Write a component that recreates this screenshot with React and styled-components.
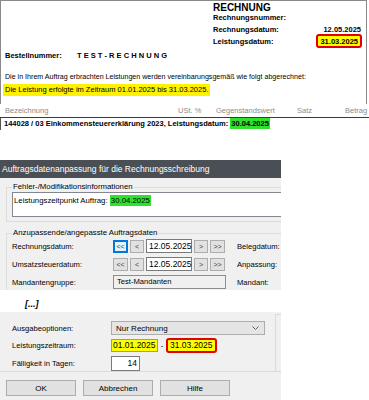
import React from 'react'
import styled, { createGlobalStyle } from 'styled-components'

const GlobalStyle = createGlobalStyle`
  * { box-sizing: border-box; }
  html, body { margin: 0; padding: 0; background: #ffffff; }
  body {
    width: 369px;
    height: 400px;
    overflow: hidden;
    font-family: "Liberation Sans", Arial, sans-serif;
    color: #000;
  }
`

function DatePicker({ value, focused }) {
  return (
    <Picker>
      <StepButton $focused={focused} $wide>{'<<'}</StepButton>
      <StepButton>{'<'}</StepButton>
      <DateInput>{value}</DateInput>
      <StepButton>{'>'}</StepButton>
      <StepButton $wide>{'>>'}</StepButton>
    </Picker>
  )
}

function App() {
  return (
    <>
      <GlobalStyle />
      <Page>
        <Invoice>
          <Frame>
            <HeadBlock>
              <DocTitle>RECHNUNG</DocTitle>
              <InfoRow><span>Rechnungsnummer:</span><span></span></InfoRow>
              <InfoRow><span>Rechnungsdatum:</span><InfoValue>12.05.2025</InfoValue></InfoRow>
              <InfoRow><span>Leistungsdatum:</span><MarkedValue>31.03.2025</MarkedValue></InfoRow>
            </HeadBlock>
            <OrderRow>
              <OrderLabel>Bestellnummer:</OrderLabel>
              <span>T E S T - R E C H N U N G</span>
            </OrderRow>
            <Para $gap={10} $size={7.1}>Die in Ihrem Auftrag erbrachten Leistungen werden vereinbarungsgemäß wie folgt abgerechnet:</Para>
            <Para $gap={1} $tight><Yellow>Die Leistung erfolgte im Zeitraum 01.01.2025 bis 31.03.2025.</Yellow></Para>
          </Frame>
          <TableHead>
            <span>Bezeichnung</span>
            <span>USt. %</span>
            <span>Gegenstandswert</span>
            <span>Satz</span>
            <span>Betrag</span>
          </TableHead>
          <TableRow>
            144028 / 03 Einkommensteuererklärung 2023, Leistungsdatum: <Green>30.04.2025</Green>
          </TableRow>
        </Invoice>

        <Dialog>
          <TitleBar>Auftragsdatenanpassung für die Rechnungsschreibung</TitleBar>
          <DialogBody>
            <Group>
              <Legend>Fehler-/Modifikationsinformationen</Legend>
              <Memo>Leistungszeitpunkt Auftrag: <Green>30.04.2025</Green></Memo>
            </Group>
            <Group $open>
              <Legend>Anzupassende/angepasste Auftragsdaten</Legend>
              <Rows>
                <FieldRow>
                  <FieldLabel>Rechnungsdatum:</FieldLabel>
                  <DatePicker value="12.05.2025" focused />
                  <SideLabel>Belegdatum:</SideLabel>
                </FieldRow>
                <FieldRow>
                  <FieldLabel>Umsatzsteuerdatum:</FieldLabel>
                  <DatePicker value="12.05.2025" />
                  <SideLabel>Anpassung:</SideLabel>
                </FieldRow>
                <FieldRow>
                  <FieldLabel>Mandantengruppe:</FieldLabel>
                  <ReadOnlyBox>Test-Mandanten</ReadOnlyBox>
                  <SideLabel $shift={11}>Mandant:</SideLabel>
                </FieldRow>
              </Rows>
            </Group>
          </DialogBody>

          <Ellipsis>[...]</Ellipsis>

          <LowerPanel>
            <OptionsArea>
              <LeftOptions>
                <OptionRow>
                  <OptionLabel>Ausgabeoptionen:</OptionLabel>
                  <Select>
                    <span>Nur Rechnung</span>
                    <svg width="7" height="4" viewBox="0 0 7 4">
                      <path d="M0.5 0.5 L3.5 3.5 L6.5 0.5" fill="none" stroke="#606060" strokeWidth="1" />
                    </svg>
                  </Select>
                </OptionRow>
                <OptionRow>
                  <OptionLabel>Leistungszeitraum:</OptionLabel>
                  <PeriodInput>01.01.2025</PeriodInput>
                  <Dash>-</Dash>
                  <PeriodInput $marked>31.03.2025</PeriodInput>
                </OptionRow>
                <OptionRow $gap={4}>
                  <OptionLabel>Fälligkeit in Tagen:</OptionLabel>
                  <NumberInput>14</NumberInput>
                </OptionRow>
              </LeftOptions>
              <SidePanel />
            </OptionsArea>
            <ButtonRow>
              <DialogButton>OK</DialogButton>
              <DialogButton>Abbrechen</DialogButton>
              <DialogButton>Hilfe</DialogButton>
            </ButtonRow>
          </LowerPanel>
        </Dialog>
      </Page>
    </>
  )
}

const Page = styled.div`
  width: 369px;
  height: 400px;
  display: flex;
  flex-direction: column;
`

/* ---------- invoice ---------- */

const Invoice = styled.div`
  font-size: 7.5px;
  white-space: nowrap;
`

const Frame = styled.div`
  width: 367px;
  height: 104px;
  border: 1px solid #8a8a8a;
  border-bottom: none;
  display: flex;
  flex-direction: column;
`

const HeadBlock = styled.div`
  align-self: flex-end;
  width: 149px;
  margin-right: 4px;
  font-weight: bold;
`

const DocTitle = styled.div`
  font-size: 10px;
  line-height: 11px;
  padding-top: 1px;
  margin-bottom: -2px;
`

const InfoRow = styled.div`
  height: 12px;
  display: flex;
  align-items: center;
  justify-content: space-between;
`

const InfoValue = styled.span`
  padding-right: 1px;
`

const MarkedValue = styled.span`
  display: inline-flex;
  align-items: center;
  height: 14px;
  padding: 0 2px;
  background: #ffff00;
  border: 2px solid #e00000;
  border-radius: 3px;
`

const OrderRow = styled.div`
  display: flex;
  align-items: center;
  height: 12px;
  margin-top: 2px;
  padding-left: 4px;
  font-weight: bold;
`

const OrderLabel = styled.span`
  width: 72px;
`

const Para = styled.div`
  line-height: 12px;
  margin-top: ${p => p.$gap}px;
  padding-left: ${p => (p.$tight ? 2 : 4)}px;
  font-size: ${p => p.$size || 7.5}px;
`

const Yellow = styled.span`
  display: inline-block;
  padding: 0 2px;
  background: #fff200;
`

const Green = styled.span`
  background: #2ee22e;
  padding: 1px 1px;
`

const TableHead = styled.div`
  width: 369px;
  margin-top: 1px;
  display: grid;
  grid-template-columns: 173px 38px 81px 48px auto;
  line-height: 12px;
  padding-left: 5px;
  color: #8c8c8c;
  border-bottom: 1px solid #3a3a3a;
`

const TableRow = styled.div`
  line-height: 12px;
  padding-left: 3px;
  border-left: 1px solid #555;
  font-weight: bold;
`

/* ---------- dialog ---------- */

const Dialog = styled.div`
  width: 281px;
  margin-top: 30px;
  overflow: hidden;
  font-size: 7.6px;
  display: flex;
  flex-direction: column;
  flex: 1;
`

const TitleBar = styled.div`
  height: 18px;
  line-height: 18px;
  padding-left: 2px;
  background: #4a4f55;
  color: #ffffff;
  font-size: 8.5px;
  white-space: nowrap;
`

const DialogBody = styled.div`
  background: #f0f0f0;
  padding-top: 4px;
`

const Group = styled.fieldset`
  margin: ${p => (p.$open ? '6px' : '0')} 0 0 6px;
  padding: 0 0 ${p => (p.$open ? 1 : 4)}px 5px;
  border: 1px solid #dcdcdc;
  border-right: none;
  ${p => p.$open && 'border-bottom: none;'}
  min-width: 0;
`

const Legend = styled.legend`
  padding: 0 1px;
  line-height: 10px;
  font-size: 7.8px;
  white-space: nowrap;
`

const Memo = styled.div`
  width: calc(100% + 6px);
  height: 25px;
  background: #ffffff;
  border: 1px solid #828790;
  padding: 3px 0 0 1px;
  line-height: 10px;
  font-size: 7.8px;
  white-space: nowrap;
`

const Rows = styled.div`
  margin-top: 1px;
  display: flex;
  flex-direction: column;
  gap: 4px;
`

const FieldRow = styled.div`
  display: flex;
  align-items: center;
  height: 14px;
  white-space: nowrap;
`

const FieldLabel = styled.span`
  width: 101px;
  flex: none;
`

const Picker = styled.div`
  display: flex;
  gap: 2px;
  height: 13px;
`

const StepButton = styled.div`
  width: ${p => (p.$wide ? 15 : 14)}px;
  height: 13px;
  display: flex;
  align-items: center;
  justify-content: center;
  font-size: 7px;
  color: #404040;
  background: ${p => (p.$focused ? '#e5f1fb' : '#e1e1e1')};
  border: 1px solid ${p => (p.$focused ? '#0078d7' : '#adadad')};
  box-shadow: ${p => (p.$focused ? 'inset 0 0 0 1px #0078d7' : 'none')};
`

const DateInput = styled.div`
  width: 46px;
  height: 14px;
  margin-top: -1px;
  background: #ffffff;
  border: 1px solid #7a7a7a;
  font-size: 8.5px;
  line-height: 12px;
  padding-left: 2px;
`

const SideLabel = styled.span`
  margin-left: ${p => p.$shift || 12}px;
`

const ReadOnlyBox = styled.div`
  width: 113px;
  height: 14px;
  background: #f0f0f0;
  border: 1px solid #8d8d8d;
  line-height: 12px;
  padding-left: 3px;
`

const Ellipsis = styled.div`
  height: 22px;
  padding: 9px 0 0 25px;
  line-height: 10px;
  font-size: 9px;
  font-weight: bold;
  font-style: italic;
`

const LowerPanel = styled.div`
  flex: 1;
  background: #f0f0f0;
  padding-top: 2px;
`

const OptionsArea = styled.div`
  display: flex;
`

const LeftOptions = styled.div`
  width: 275px;
  padding: 7px 0 1px 12px;
  border-bottom: 1px solid #dadada;
  display: flex;
  flex-direction: column;
  gap: 3px;
`

const SidePanel = styled.div`
  flex: 1;
  border: 1px solid #dadada;
  border-right: none;
`

const OptionRow = styled.div`
  display: flex;
  align-items: center;
  height: 14px;
  margin-top: ${p => (p.$gap ? p.$gap - 3 : 0)}px;
  white-space: nowrap;
`

const OptionLabel = styled.span`
  width: 99px;
  flex: none;
`

const Select = styled.div`
  width: 154px;
  height: 14px;
  display: flex;
  align-items: center;
  justify-content: space-between;
  padding: 0 5px 0 4px;
  background: #e5e5e5;
  border: 1px solid #adadad;
  font-size: 8px;
`

const PeriodInput = styled.div`
  width: ${p => (p.$marked ? 51 : 47)}px;
  height: ${p => (p.$marked ? 15 : 13)}px;
  background: #ffff00;
  border: ${p => (p.$marked ? '2px solid #e00000' : '1px solid #9a9a9a')};
  border-radius: ${p => (p.$marked ? 3 : 0)}px;
  display: flex;
  align-items: center;
  padding-left: ${p => (p.$marked ? 2 : 1)}px;
  font-size: 8.5px;
`

const Dash = styled.span`
  width: 8px;
  text-align: center;
`

const NumberInput = styled.div`
  width: 29px;
  height: 15px;
  background: #ffffff;
  border: 1px solid #7a7a7a;
  text-align: right;
  padding-right: 2px;
  line-height: 13px;
  font-size: 8.5px;
`

const ButtonRow = styled.div`
  display: flex;
  gap: 7px;
  margin-top: 8px;
  padding-left: 6px;
`

const DialogButton = styled.div`
  width: 70px;
  height: 16px;
  display: flex;
  align-items: center;
  justify-content: center;
  background: #e1e1e1;
  border: 1px solid #adadad;
  font-size: 8px;
`

export default App
